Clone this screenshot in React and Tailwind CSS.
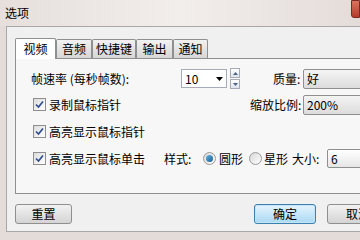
import React from 'react';

const font = { fontFamily: '"Noto Sans CJK SC", "Liberation Sans", sans-serif' };

const Check = () => (
  <span className="w-[13px] h-[13px] border border-[#8f8f8f] bg-gradient-to-br from-[#dcdcdc] to-white flex items-center justify-center shrink-0">
    <svg width="9" height="9" viewBox="0 0 9 9">
      <path d="M1 4.5 L3.5 7 L8 1.5" fill="none" stroke="#2b4a8f" strokeWidth="1.6" />
    </svg>
  </span>
);

const Radio = ({ on }) => (
  <span className="w-[13px] h-[13px] rounded-full border border-[#9a9a9a] bg-gradient-to-br from-[#d8d8d8] to-white flex items-center justify-center shrink-0">
    {on && <span className="w-[7px] h-[7px] rounded-full bg-gradient-to-br from-[#5fb4e6] to-[#1c5f93]" />}
  </span>
);

const Combo = ({ value, w }) => (
  <div className={`h-[20px] ${w} border border-[#8e8f8f] rounded-[2px] bg-gradient-to-b from-[#f4f4f4] to-[#dcdcdc] flex items-center px-[3px] text-[12px] text-black`}>
    {value}
  </div>
);

const Tab = ({ label, active, w }) => (
  <div
    className={`${w} flex items-center justify-center text-[12px] border border-[#8e8f8f] border-b-0 rounded-t-[2px] ${
      active ? 'h-[21px] bg-white relative z-10 -mb-px' : 'h-[19px] bg-gradient-to-b from-[#f2f2f2] to-[#d6d6d6]'
    }`}
  >
    {label}
  </div>
);

export default function App() {
  return (
    <div className="w-[360px] h-[240px] overflow-hidden bg-[#e3dcd9] relative" style={font}>
      <div className="h-[26px] flex items-center justify-between bg-gradient-to-r from-[#e6dfdc] via-[#f2eeec] to-[#e4dcd9]">
        <span className="pl-[5px] text-[12px] text-black">选项</span>
        <div className="w-[9px] h-[18px] self-start bg-gradient-to-b from-[#d9735f] to-[#b63a2b] rounded-bl-[3px] border border-[#7a2a20]" />
      </div>
      <div className="ml-[6px] w-[420px] h-[206px] border border-[#a8a8a8] bg-[#f0f0f0] pl-[8px] pt-[10px]">
        <div className="flex items-end h-[21px]">
          <Tab label="视频" active w="w-[41px]" />
          <Tab label="音频" w="w-[36px]" />
          <Tab label="快捷键" w="w-[44px]" />
          <Tab label="输出" w="w-[37px]" />
          <Tab label="通知" w="w-[35px]" />
        </div>
        <div className="w-[420px] h-[136px] border border-[#8e8f8f] bg-[#f7f7f7] text-[12px] text-black pl-[15px] pt-[9px]">
          <div className="flex items-center h-[21px]">
            <span className="w-[150px]">帧速率 (每秒帧数):</span>
            <div className="w-[46px] h-[19px] border border-[#a5acb5] bg-white flex items-center justify-between px-[3px]">
              <span>10</span>
              <svg width="7" height="4" viewBox="0 0 7 4"><path d="M0 0h7L3.5 4z" fill="#000" /></svg>
            </div>
            <div className="ml-[3px] flex flex-col gap-px">
              <div className="w-[10px] h-[10px] border border-[#a5acb5] bg-gradient-to-b from-white to-[#dde4ee] flex items-center justify-center">
                <svg width="5" height="3" viewBox="0 0 5 3"><path d="M0 3h5L2.5 0z" fill="#4d6185" /></svg>
              </div>
              <div className="w-[10px] h-[10px] border border-[#a5acb5] bg-gradient-to-b from-white to-[#dde4ee] flex items-center justify-center">
                <svg width="5" height="3" viewBox="0 0 5 3"><path d="M0 0h5L2.5 3z" fill="#4d6185" /></svg>
              </div>
            </div>
            <span className="ml-[33px] w-[30px]">质量:</span>
            <Combo value="好" w="w-[80px]" />
          </div>
          <div className="flex items-center h-[21px] mt-[5px]">
            <div className="flex items-center gap-[3px] w-[219px] pl-[2px]">
              <Check />
              <span>录制鼠标指针</span>
            </div>
            <span className="w-[53px]">缩放比例:</span>
            <Combo value="200%" w="w-[80px]" />
          </div>
          <div className="flex items-center h-[21px] mt-[6px]">
            <div className="flex items-center gap-[3px] pl-[2px]">
              <Check />
              <span>高亮显示鼠标指针</span>
            </div>
          </div>
          <div className="flex items-center h-[21px] mt-[6px] whitespace-nowrap">
            <div className="flex items-center gap-[3px] pl-[2px] w-[133px] shrink-0">
              <Check />
              <span>高亮显示鼠标单击</span>
            </div>
            <span className="w-[39px] shrink-0">样式:</span>
            <div className="flex items-center gap-[3px] w-[46px] shrink-0">
              <Radio on />
              <span>圆形</span>
            </div>
            <div className="flex items-center gap-[2px] w-[40px] shrink-0">
              <Radio />
              <span>星形</span>
            </div>
            <span className="w-[38px] pl-[3px] shrink-0">大小:</span>
            <div className="w-[60px] h-[19px] shrink-0 border border-[#8e8f8f] rounded-[2px] bg-gradient-to-b from-white to-[#e6e6e6] flex items-center px-[3px]">6</div>
          </div>
        </div>
        <div className="flex items-center mt-[10px] text-[12px] text-black">
          <button className="w-[57px] h-[20px] border border-[#8e8f8f] rounded-[3px] bg-gradient-to-b from-[#f2f2f2] to-[#d4d4d4]">重置</button>
          <button className="ml-[182px] w-[62px] h-[20px] border border-[#3c7fb1] rounded-[3px] bg-gradient-to-b from-[#e5f4fc] to-[#a9d9f4] shadow-[inset_0_0_0_1px_#c4e5f6]">确定</button>
          <button className="ml-[11px] w-[62px] h-[20px] border border-[#8e8f8f] rounded-[3px] bg-gradient-to-b from-[#f2f2f2] to-[#d4d4d4]">取消</button>
        </div>
      </div>
    </div>
  );
}
